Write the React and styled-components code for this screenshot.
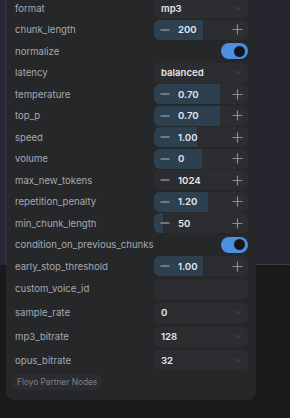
import React from "react";
import styled, { createGlobalStyle } from "styled-components";

const GlobalStyle = createGlobalStyle`
  html, body {
    margin: 0;
    padding: 0;
    background: #1b1b1d;
    overflow: hidden;
  }
  * {
    box-sizing: border-box;
  }
`;

const Canvas = styled.div`
  position: relative;
  width: 290px;
  height: 418px;
  overflow: hidden;
  background: #1a1a1c;
  font-family: Inter, "Noto Sans", sans-serif;
`;

const Group = styled.div`
  position: absolute;
  left: 5px;
  top: -20px;
  width: 320px;
  height: 285px;
  background: #23242d;
  border-left: 1px solid #33344a;
  border-bottom: 1px solid #3a3b45;
`;

const GroupShade = styled.div`
  position: absolute;
  left: 0;
  top: -20px;
  width: 5px;
  height: 285px;
  background: #262638;
`;

const Node = styled.div`
  position: absolute;
  left: 6px;
  top: -4px;
  width: 250px;
  padding: 1.25px 8px 10px 9px;
  background: #262729;
  border-radius: 0 0 8px 8px;
  display: flex;
  flex-direction: column;
`;

const Row = styled.div`
  height: ${(p) => p.$h || 21.5}px;
  display: flex;
  align-items: center;
  justify-content: space-between;
`;

const Label = styled.span`
  font-size: 9.6px;
  color: #a6a7b0;
  white-space: nowrap;
`;

const Widget = styled.div`
  position: relative;
  flex: 0 0 94px;
  height: 20px;
  border-radius: 6px;
  background: #2c2d30;
  overflow: hidden;
  display: flex;
  align-items: center;
`;

const Fill = styled.div`
  position: absolute;
  left: 0;
  top: 0;
  bottom: 0;
  background: #2d4050;
`;

const Step = styled.span`
  position: relative;
  width: 22px;
  height: 20px;
  display: flex;
  align-items: center;
  justify-content: center;
  color: #8d8e94;
  flex: 0 0 auto;
`;

const Value = styled.span`
  position: relative;
  flex: 1;
  font-size: 9.6px;
  font-weight: 600;
  color: #e6e6ea;
  padding-left: 2px;
`;

const ComboText = styled.span`
  flex: 1;
  font-size: 9.6px;
  font-weight: 600;
  color: #e6e6ea;
  padding-left: 7px;
`;

const Chevron = styled.span`
  width: 22px;
  display: flex;
  justify-content: center;
  color: #4f5055;
`;

const Toggle = styled.div`
  width: 27px;
  height: 16px;
  border-radius: 8px;
  background: #4a8fe0;
  display: flex;
  align-items: center;
  justify-content: flex-end;
  padding-right: 3px;
`;

const Knob = styled.span`
  width: 11px;
  height: 11px;
  border-radius: 50%;
  background: #15161a;
`;

const Badge = styled.div`
  align-self: flex-start;
  margin-top: 2px;
  margin-left: -3px;
  height: 16px;
  padding: 0 5px;
  border-radius: 6px;
  background: #2b2c2f;
  font-size: 8.3px;
  color: #7f8086;
  display: flex;
  align-items: center;
`;

const Minus = () => (
  <svg width="10" height="10" viewBox="0 0 10 10">
    <path d="M0.5 5h9" stroke="currentColor" strokeWidth="1.3" />
  </svg>
);

const Plus = () => (
  <svg width="11" height="11" viewBox="0 0 11 11">
    <path d="M0.5 5.5h10M5.5 0.5v10" stroke="currentColor" strokeWidth="1.2" />
  </svg>
);

const Down = () => (
  <svg width="7" height="5" viewBox="0 0 7 5">
    <path d="M0.7 1l2.8 2.8L6.3 1" stroke="currentColor" strokeWidth="1" fill="none" />
  </svg>
);

const NumberWidget = ({ value, fill }) => (
  <Widget>
    {fill > 0 && <Fill style={{ width: `${fill}%` }} />}
    <Step>
      <Minus />
    </Step>
    <Value>{value}</Value>
    <Step>
      <Plus />
    </Step>
  </Widget>
);

const ComboWidget = ({ value }) => (
  <Widget>
    <ComboText>{value}</ComboText>
    <Chevron>
      <Down />
    </Chevron>
  </Widget>
);

const rows = [
  { label: "format", type: "combo", value: "mp3" },
  { label: "chunk_length", type: "number", value: "200", fill: 52 },
  { label: "normalize", type: "toggle" },
  { label: "latency", type: "combo", value: "balanced" },
  { label: "temperature", type: "number", value: "0.70", fill: 70 },
  { label: "top_p", type: "number", value: "0.70", fill: 70 },
  { label: "speed", type: "number", value: "1.00", fill: 46 },
  { label: "volume", type: "number", value: "0", fill: 51 },
  { label: "max_new_tokens", type: "number", value: "1024", fill: 0 },
  { label: "repetition_penalty", type: "number", value: "1.20", fill: 57 },
  { label: "min_chunk_length", type: "number", value: "50", fill: 10 },
  { label: "condition_on_previous_chunks", type: "toggle" },
  { label: "early_stop_threshold", type: "number", value: "1.00", fill: 52 },
  { label: "custom_voice_id", type: "text", h: 24 },
  { label: "sample_rate", type: "combo", value: "0", h: 24 },
  { label: "mp3_bitrate", type: "combo", value: "128", h: 24 },
  { label: "opus_bitrate", type: "combo", value: "32", h: 23 },
];

const App = () => (
  <>
    <GlobalStyle />
    <Canvas>
      <GroupShade />
      <Group />
      <Node>
        {rows.map((r) => (
          <Row key={r.label} $h={r.h}>
            <Label>{r.label}</Label>
            {r.type === "combo" && <ComboWidget value={r.value} />}
            {r.type === "number" && <NumberWidget value={r.value} fill={r.fill} />}
            {r.type === "toggle" && (
              <Toggle>
                <Knob />
              </Toggle>
            )}
            {r.type === "text" && <Widget />}
          </Row>
        ))}
        <Badge>Floyo Partner Nodes</Badge>
      </Node>
    </Canvas>
  </>
);

export default App;
